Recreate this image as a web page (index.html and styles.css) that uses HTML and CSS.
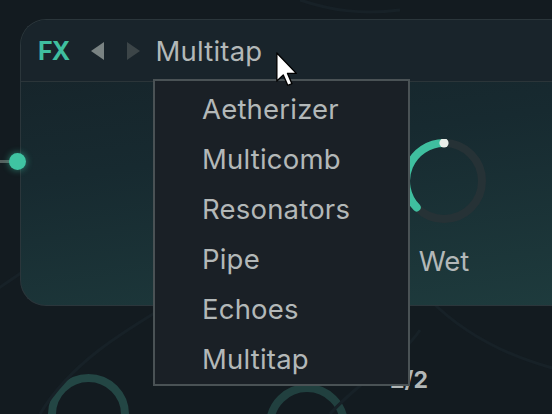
FILE: index.html
```html
<!DOCTYPE html>
<html>
<head>
<meta charset="utf-8">
<link rel="stylesheet" href="styles.css">
</head>
<body>
<div class="stage">
  <svg class="bg-lines" width="552" height="414" viewBox="0 0 552 414">
    <path d="M-20 300 C 60 250, 120 200, 170 120" />
    <path d="M40 414 C 90 330, 200 300, 260 240" />
    <path d="M430 300 C 470 340, 520 360, 560 370" />
    <path d="M330 414 C 360 380, 400 360, 420 330" />
    <path d="M300 0 C 330 10, 360 15, 400 10" />
  </svg>

  <section class="panel">
    <header class="panel-head">
      <span class="fx">FX</span>
      <span class="tri tri-left"></span>
      <span class="tri tri-right"></span>
      <span class="preset">Multitap</span>
    </header>
    <div class="panel-body">
      <div class="knob">
        <svg width="84" height="84" viewBox="0 0 84 84">
          <circle cx="42" cy="42" r="38" class="knob-track"/>
          <path d="M42 4 A38 38 0 0 0 14.7 68.4" class="knob-arc"/>
          <circle cx="42" cy="4" r="4.6" class="knob-dot"/>
        </svg>
        <span class="knob-label">Wet</span>
      </div>
    </div>
  </section>

  <div class="bottom-row">
    <span class="ring ring-a"></span>
    <span class="ring ring-b"></span>
    <span class="page">2/2</span>
  </div>

  <div class="port"><span class="port-wire"></span><span class="port-dot"></span></div>

  <ul class="menu">
    <li>Aetherizer</li>
    <li>Multicomb</li>
    <li>Resonators</li>
    <li>Pipe</li>
    <li>Echoes</li>
    <li>Multitap</li>
  </ul>

  <svg class="cursor" width="22" height="36" viewBox="0 0 13 21">
    <path d="M0.5 0.5 L0.5 17 L4.3 13.4 L7 19.6 L9.4 18.6 L6.8 12.5 L12 12.5 Z" />
  </svg>
</div>
</body>
</html>
```
FILE: styles.css
```css
* { box-sizing: border-box; }
html, body {
  margin: 0;
  padding: 0;
  width: 552px;
  height: 414px;
  overflow: hidden;
  background: #131b20;
}
.stage {
  position: relative;
  width: 552px;
  height: 414px;
  overflow: hidden;
  font-family: Inter, "Noto Sans", sans-serif;
  padding-top: 19px;
}
.bg-lines {
  position: absolute;
  left: 0;
  top: 0;
}
.bg-lines path {
  fill: none;
  stroke: #172127;
  stroke-width: 3;
}
.panel {
  position: relative;
  margin-left: 20px;
  width: 560px;
  height: 287px;
  border-radius: 26px 0 0 26px;
  border: 1px solid #2b363b;
  border-right: none;
  background: linear-gradient(172deg, #162228 0%, #172a30 45%, #1e3b3d 100%);
  display: flex;
  flex-direction: column;
  overflow: hidden;
}
.panel-head {
  height: 62px;
  flex: none;
  display: flex;
  align-items: center;
  padding-left: 17px;
  background: #19242b;
  border-bottom: 1px solid #2b3539;
}
.fx {
  color: #3fbf9f;
  font-weight: 700;
  font-size: 25px;
  letter-spacing: -0.8px;
  margin-right: 21px;
}
.tri {
  width: 0;
  height: 0;
  border-top: 9px solid transparent;
  border-bottom: 9px solid transparent;
}
.tri-left {
  border-right: 13px solid #7a8383;
  margin-right: 23px;
}
.tri-right {
  border-left: 13px solid #3c4548;
  margin-right: 16px;
}
.preset {
  color: #b3b8b8;
  font-size: 27.5px;
  letter-spacing: 0.2px;
}
.panel-body {
  flex: 1;
  padding-left: 381px;
  padding-top: 57px;
}
.knob {
  width: 84px;
  display: flex;
  flex-direction: column;
  align-items: center;
}
.knob-track {
  fill: none;
  stroke: #263236;
  stroke-width: 8;
}
.knob-arc {
  fill: none;
  stroke: #3fbf9f;
  stroke-width: 8;
  stroke-linecap: round;
}
.knob-dot { fill: #e9ede9; }
.knob-label {
  margin-top: 22px;
  color: #b3b8b8;
  font-size: 27.5px;
  line-height: 32px;
}
.bottom-row {
  display: flex;
  align-items: flex-start;
  margin-top: 65px;
  padding-left: 48px;
}
.ring {
  flex: none;
  border-radius: 50%;
  border: 8px solid #234644;
}
.ring-a {
  width: 81px;
  height: 81px;
  margin-top: 3px;
}
.ring-b {
  width: 82px;
  height: 82px;
  margin-left: 137px;
  margin-top: 13px;
  border-color: #21403f;
}
.page {
  margin-left: 42px;
  margin-top: -5px;
  color: #b3b8b8;
  font-weight: 700;
  font-size: 23px;
  line-height: 28px;
}
.port {
  position: absolute;
  left: 0;
  top: 153px;
  display: flex;
  align-items: center;
}
.port-wire {
  width: 12px;
  height: 3px;
  background: #55605f;
}
.port-dot {
  width: 17px;
  height: 17px;
  margin-left: -3px;
  border-radius: 50%;
  background: #3fc4a2;
  box-shadow: 0 0 6px 1px rgba(63, 196, 162, 0.45);
}
.menu {
  position: absolute;
  left: 153px;
  top: 79px;
  width: 257px;
  height: 307px;
  margin: 0;
  padding: 3px 0 0 47px;
  list-style: none;
  background: #1a2026;
  border: 2px solid #4a5255;
}
.menu li {
  color: #b3b8b8;
  font-size: 27.5px;
  line-height: 50px;
  height: 50px;
  letter-spacing: 0.2px;
}
.cursor {
  position: absolute;
  left: 276px;
  top: 52px;
}
.cursor path {
  fill: #ffffff;
  stroke: #000000;
  stroke-width: 0.8;
  stroke-linejoin: round;
}
```
